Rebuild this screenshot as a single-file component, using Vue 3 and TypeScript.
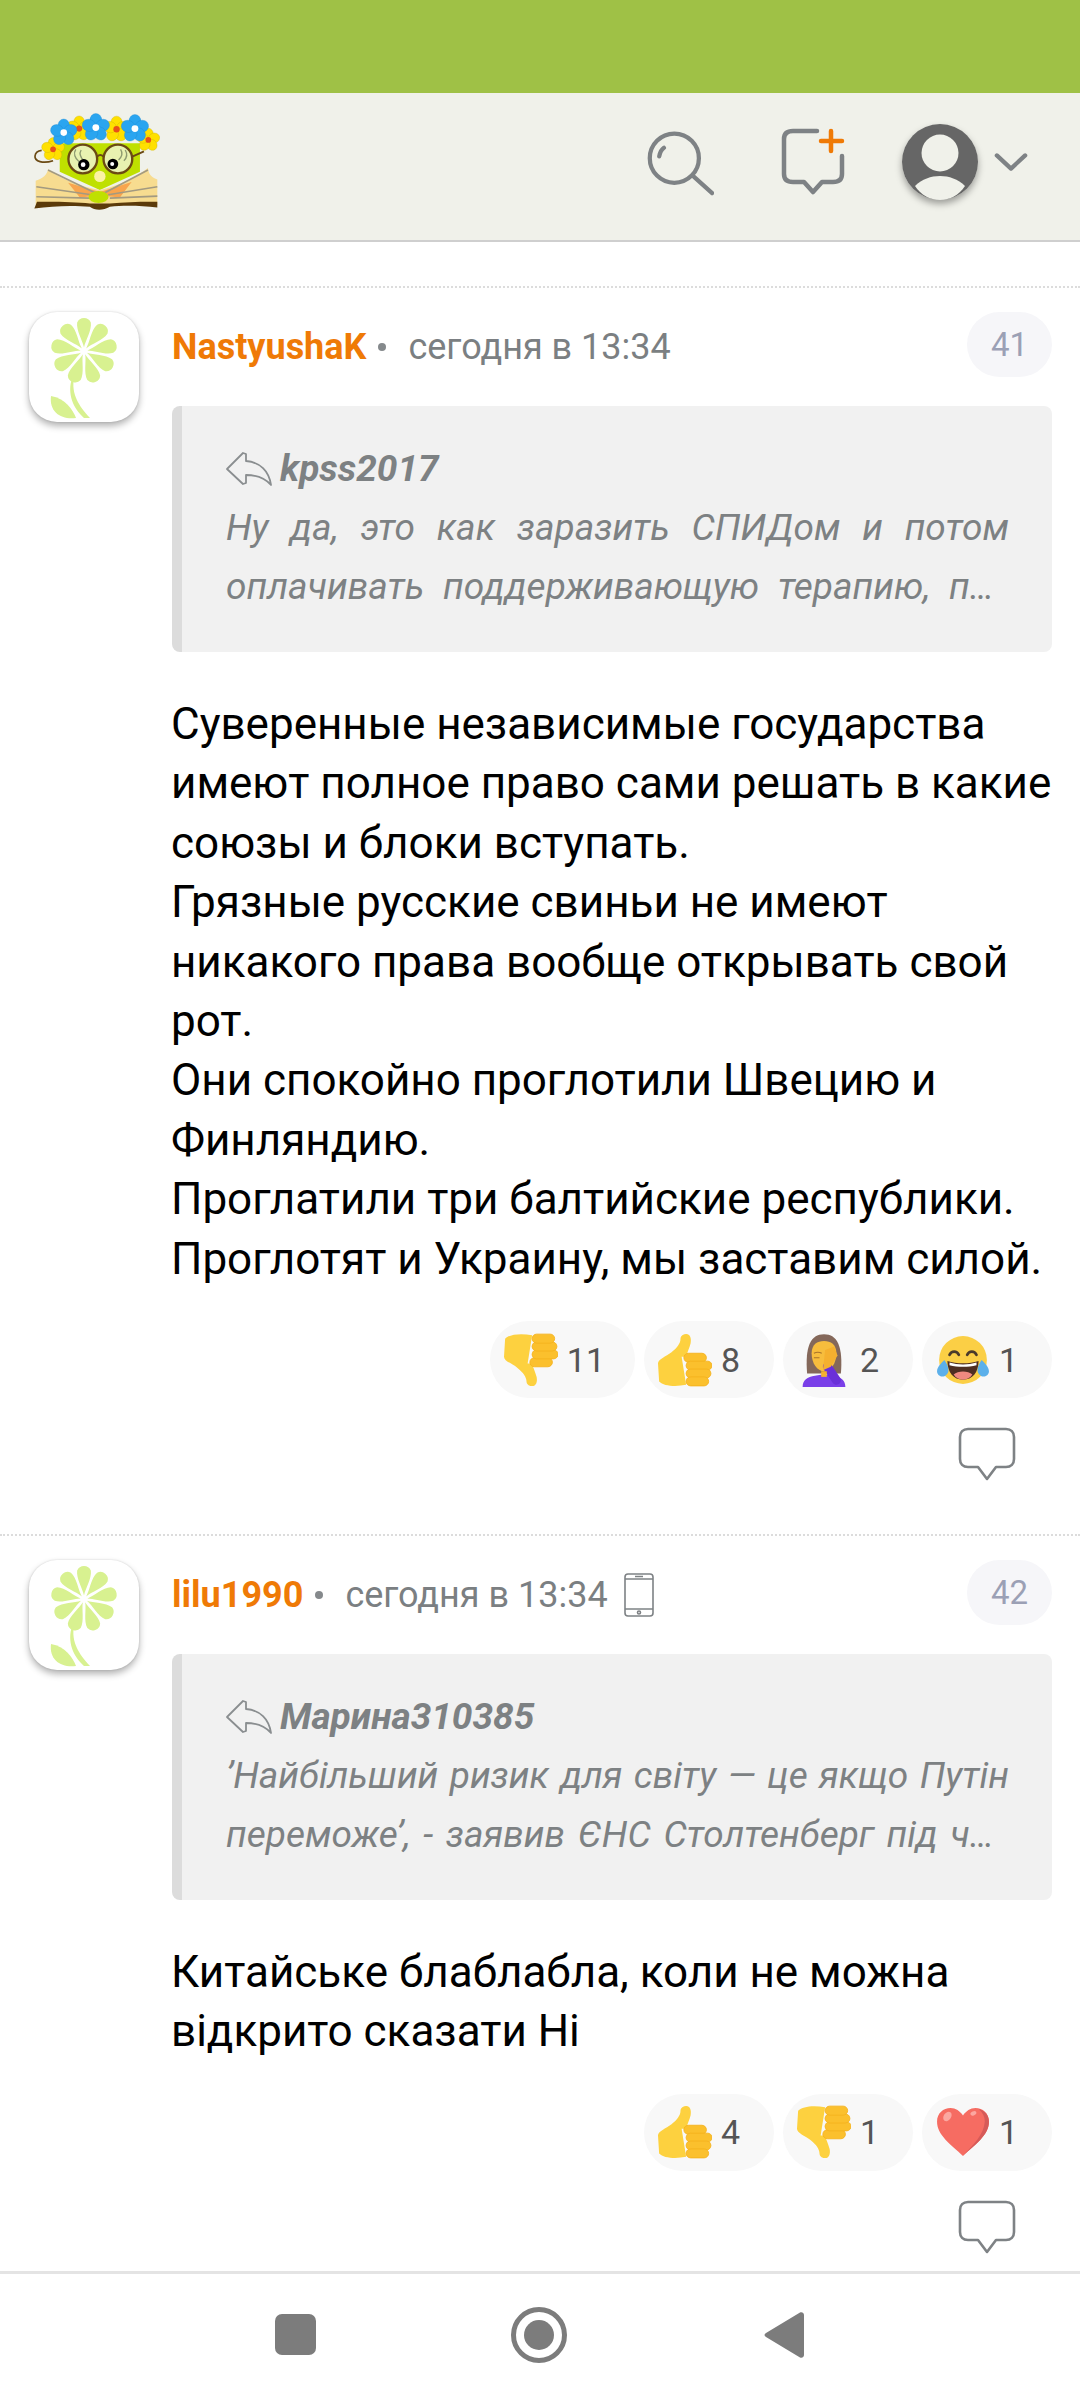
<script setup lang="ts">
interface Reaction { icon: string; count: number }
interface Comment {
  name: string; num: number; mobile: boolean; quoteAuthor: string; quote: string[];
  lines: string[]; reactions: Reaction[];
}
const comments: Comment[] = [
  {
    name: 'NastyushaK', num: 41, mobile: false, quoteAuthor: 'kpss2017',
    quote: ['Ну да, это как заразить СПИДом и потом', 'оплачивать поддерживающую терапию, п…'],
    lines: [
      'Суверенные независимые государства', 'имеют полное право сами решать в какие', 'союзы и блоки вступать.',
      'Грязные русские свиньи не имеют', 'никакого права вообще открывать свой', 'рот.',
      'Они спокойно проглотили Швецию и', 'Финляндию.', 'Проглатили три балтийские республики.',
      'Проглотят и Украину, мы заставим силой.',
    ],
    reactions: [
      { icon: 'down', count: 11 }, { icon: 'up', count: 8 }, { icon: 'palm', count: 2 }, { icon: 'laugh', count: 1 },
    ],
  },
  {
    name: 'lilu1990', num: 42, mobile: true, quoteAuthor: 'Марина310385',
    quote: ['’Найбільший ризик для світу — це якщо Путін', 'переможе’, - заявив ЄНС Столтенберг під ч…'],
    lines: ['Китайське блаблабла, коли не можна', 'відкрито сказати Ні'],
    reactions: [{ icon: 'up', count: 4 }, { icon: 'down', count: 1 }, { icon: 'heart', count: 1 }],
  },
];
const petals: number[] = [0, 40, 80, 120, 160, 200, 240, 280, 320];
const fivePetals: number[] = [0, 72, 144, 216, 288];
const flowers = [
  { x: 100, y: 178, r: 25, c: '#ffe000', m: '#e8501a' },
  { x: 385, y: 150, r: 25, c: '#ffe000', m: '#e8501a' },
  { x: 178, y: 116, r: 27, c: '#ffe000', m: '#e8501a' },
  { x: 290, y: 118, r: 28, c: '#ffe000', m: '#e8501a' },
  { x: 132, y: 128, r: 29, c: '#2aa5f0', m: '#ffffff' },
  { x: 228, y: 113, r: 30, c: '#2aa5f0', m: '#ffffff' },
  { x: 345, y: 116, r: 30, c: '#2aa5f0', m: '#ffffff' },
];
</script>

<template>
  <div class="page">
    <svg class="defs" width="0" height="0" aria-hidden="true">
      <defs>
        <symbol id="flower" viewBox="0 0 110 110">
          <g transform="translate(55 39) scale(1.14)" fill="#d8f190">
            <path v-for="a in petals" :key="a" :transform="`rotate(${a})`"
              d="M0 -3 C-1 -9 -7 -18 -6 -25 A6.500 6.500 0 0 1 6 -25 C7 -18 1 -9 0 -3Z" />
          </g>
          <path d="M45 66 C42 82 50 94 61 106 L55 106 C44 96 38 82 43 66Z" fill="#d8f190" />
          <path d="M22 84 C36 86 44 98 47 106 C32 108 20 100 22 84Z" fill="#d8f190" />
        </symbol>
        <symbol id="up" viewBox="0 0 48 48">
          <path d="M24 1c4-1 6 3 5 8-1 4-3 8-4 12h-4L25 46c-10 2-20 1-24-3L0 27c0-4 7-6 12-10 5-4 8-8 8-12 0-2 2-4 4-4z" fill="#fdd13f" />
          <g fill="#fbc02d" stroke="#f5b21e" stroke-width=".8">
            <rect x="23" y="18" width="20" height="8" rx="4" />
            <rect x="25" y="25" width="23" height="8" rx="4" />
            <rect x="25" y="32" width="22" height="8" rx="4" />
            <rect x="25" y="39" width="20" height="8" rx="4" />
          </g>
        </symbol>
        <symbol id="down" viewBox="0 0 48 48">
          <g transform="matrix(1 0 0 -1 0 48)">
            <path d="M24 1c4-1 6 3 5 8-1 4-3 8-4 12h-4L25 46c-10 2-20 1-24-3L0 27c0-4 7-6 12-10 5-4 8-8 8-12 0-2 2-4 4-4z" fill="#fdd13f" />
            <g fill="#fbc02d" stroke="#f5b21e" stroke-width=".8">
              <rect x="23" y="18" width="20" height="8" rx="4" />
              <rect x="25" y="25" width="23" height="8" rx="4" />
              <rect x="25" y="32" width="22" height="8" rx="4" />
              <rect x="25" y="39" width="20" height="8" rx="4" />
            </g>
          </g>
        </symbol>
        <symbol id="palm" viewBox="0 0 48 48">
          <path d="M9 36C7 12 12 1 24 1s17 11 15 35z" fill="#84685a" />
          <path d="M13 18c0-8 5-11 11-11s11 3 11 11c0 9-5 16-11 16s-11-7-11-16z" fill="#f7bd3d" />
          <path d="M5 48c0-6 4-9 11-10l5-1h6l5 1c7 1 11 4 11 10z" fill="#7a3fe8" />
          <path d="M35 42 27 30" stroke="#6a30d8" stroke-width="8" stroke-linecap="round" />
          <path d="M23 33 25 15l8-3 3 8-6 10z" fill="#f5b02f" />
          <path d="M24 34v5" stroke="#f5b02f" stroke-width="5" />
          <path d="M15 18c2-1 5-1 7 0M15 22h5" stroke="#a8742a" stroke-width="1" fill="none" />
        </symbol>
        <symbol id="laugh" viewBox="0 0 52 48">
          <circle cx="26" cy="24" r="23" fill="#fbcf45" />
          <path d="M13 19c2-4 7-4 9 0M30 19c2-4 7-4 9 0" stroke="#4a3a2a" stroke-width="2.600" fill="none" stroke-linecap="round" />
          <path d="M11 25c9 3 21 3 30 0 0 11-6 18-15 18s-15-7-15-18z" fill="#4f2f22" />
          <path d="M17 38c4-4 14-4 18 0-2 3-5 5-9 5s-7-2-9-5z" fill="#f08a80" />
          <path d="M13 26.500c8 2.500 18 2.500 26 0v2.500c-8 2-18 2-26 0z" fill="#fff" />
          <path d="M8 24c-3 3-7 7-7 11 0 3 3 5 5 5 3 0 6-3 6-6 0-4-2-7-4-10zM44 24c3 3 7 7 7 11 0 3-3 5-5 5-3 0-6-3-6-6 0-4 2-7 4-10z" fill="#5cb0ea" />
        </symbol>
        <symbol id="heart" viewBox="0 0 52 48">
          <path d="M26 47C14 36 1 27 1 14 1 6 7 1 14 1c5 0 9 3 12 7 3-4 7-7 12-7 7 0 13 5 13 13 0 13-13 22-25 33z" fill="#f66c62" />
          <path d="M51 14c0 13-13 22-25 33 10-11 20-20 21-33 0-5-2-9-6-12 6 1 10 6 10 12z" fill="#d65a58" />
          <ellipse cx="11" cy="9" rx="3.500" ry="5" transform="rotate(35 11 9)" fill="#fba7a0" />
          <ellipse cx="36" cy="6" rx="3" ry="2" transform="rotate(-25 36 6)" fill="#fba7a0" />
        </symbol>
      </defs>
    </svg>

    <div class="statusbar"></div>

    <header class="topbar">
      <svg class="logo" viewBox="40 60 380 300">
        <path d="M100 212C70 222 44 214 46 198c1-10 10-16 20-17" stroke="#6b4a14" stroke-width="5" fill="none" />
        <path d="M120 160H360V245L240 300 120 245Z" fill="#bfe000" />
        <path d="M48 345V272C70 265 82 255 85 238c40 30 95 52 155 62v45Z" fill="#f7dc90" />
        <path d="M412 345V268C392 262 386 250 384 234c-40 30-85 52-144 66v45Z" fill="#f7dc90" />
        <path d="M145 278 240 306 335 276 300 322 240 316 180 322Z" fill="#f8a54e" />
        <g stroke="#a39a80" stroke-width="5" fill="none">
          <path d="M225 308 85 240M215 314 50 290M210 324 50 320M255 308 384 240M265 314 412 290M270 324 412 318" />
        </g>
        <path d="M44 355 52 335C110 334 170 336 210 340H270C320 336 370 334 412 335V352C360 346 310 345 270 350 250 362 225 362 210 350 160 345 100 347 44 355Z" fill="#5b3a0a" />
        <ellipse cx="236" cy="321" rx="30" ry="18" fill="#bfe000" />
        <ellipse cx="240" cy="259" rx="17" ry="17" fill="#fcf2a5" />
        <circle cx="189" cy="207" r="43" fill="#e8f2b0" stroke="#6b4a14" stroke-width="7" />
        <circle cx="294" cy="207" r="43" fill="#e8f2b0" stroke="#6b4a14" stroke-width="7" />
        <path d="M232 200Q241 190 251 200M337 200 372 184" stroke="#6b4a14" stroke-width="6" fill="none" />
        <path d="M178 215C165 205 160 190 168 178M192 212C180 200 178 190 184 180M296 210C306 200 310 190 302 178M312 212C322 202 322 190 316 180" stroke="#8d9a70" stroke-width="4" fill="none" />
        <circle cx="192" cy="224" r="17" fill="#000" /><circle cx="190" cy="224" r="7" fill="#fff" />
        <circle cx="279" cy="222" r="16" fill="#000" /><circle cx="277" cy="222" r="6" fill="#fff" />
        <g v-for="f in flowers" :key="f.x">
          <ellipse v-for="a in fivePetals" :key="a" :cx="f.x" :cy="f.y - f.r * 0.72" :rx="f.r * 0.6" :ry="f.r * 0.68"
            :fill="f.c" :stroke="f.c === '#ffe000' ? '#c9b000' : '#1d8ad0'" stroke-width="1"
            :transform="`rotate(${a} ${f.x} ${f.y})`" />
          <circle :cx="f.x" :cy="f.y" :r="f.r * 0.34" :fill="f.m" />
        </g>
      </svg>
      <div class="actions">
        <svg class="ic-search" viewBox="0 0 72 72" fill="none" stroke="#7e8285" stroke-width="4.500" stroke-linecap="round">
          <circle cx="30" cy="32" r="26" />
          <path d="M50 51 70 69M14 30c1-5 2-7 5-9" />
        </svg>
        <svg class="ic-chat" viewBox="0 0 66 72" fill="none" stroke-width="4.500" stroke-linecap="round" stroke-linejoin="round">
          <path d="M37 5H13C7 5 4 8 4 13V48C4 53 7 56 13 56H24L33 66 42 56H53C59 56 62 53 62 48V30" stroke="#7e8285" />
          <path d="M51 5V25M41 15H62" stroke="#ef7a06" />
        </svg>
        <div class="me">
          <svg viewBox="0 0 76 76">
            <circle cx="38" cy="38" r="38" fill="#666" />
            <circle cx="38" cy="29" r="18.500" fill="#f0f1ea" />
            <path d="M13 62C20 55 29 52 38 52S56 55 63 62C57 71 48 76 38 76S19 71 13 62Z" fill="#f0f1ea" />
          </svg>
        </div>
        <svg class="ic-chev" viewBox="0 0 36 22" fill="none" stroke="#7e8285" stroke-width="4.500" stroke-linecap="round" stroke-linejoin="round">
          <path d="M3 4 18 18 33 4" />
        </svg>
      </div>
    </header>

    <main class="feed">
      <article v-for="c in comments" :key="c.num" class="comment">
        <div class="avatar">
          <svg viewBox="0 0 110 110"><use href="#flower" /></svg>
        </div>
        <div class="body">
          <div class="meta">
            <span class="name">{{ c.name }}</span>
            <span class="dot"></span>
            <span class="time">сегодня в 13:34</span>
            <svg v-if="c.mobile" class="phone" viewBox="0 0 30 44" fill="none" stroke="#7e8285" stroke-width="1.600">
              <rect x="1" y="1" width="28" height="42" rx="3" />
              <path d="M1 6H29M1 36H29M11 3.500H19" />
              <circle cx="15" cy="39.500" r="1.500" />
            </svg>
            <span class="num">{{ c.num }}</span>
          </div>

          <blockquote class="quote">
            <div class="q-author">
              <svg class="q-arrow" viewBox="0 0 46 36" fill="none" stroke="#8a8e90" stroke-width="1.800" stroke-linejoin="round">
                <path d="M1 18 17 2 20 3V10C34 11 43 20 45 34 38 26 30 24 20 24V32L17 33Z" />
              </svg>
              <span>{{ c.quoteAuthor }}</span>
            </div>
            <p class="q-line">{{ c.quote[0] }}</p>
            <p class="q-line q-last">{{ c.quote[1] }}</p>
          </blockquote>

          <p class="text"><template v-for="(l, i) in c.lines" :key="i">{{ l }}<br /></template></p>

          <div class="reactions">
            <div v-for="r in c.reactions" :key="r.icon" class="pill">
              <svg class="emoji"><use :href="`#${r.icon}`" width="54" height="54" /></svg>
              <span>{{ r.count }}</span>
            </div>
          </div>

          <div class="reply">
            <svg viewBox="0 0 58 54" fill="none" stroke="#7e8285" stroke-width="2.600" stroke-linejoin="round">
              <path d="M10 2H48C53 2 56 5 56 10V32C56 37 53 40 48 40H38L29 52 20 40H10C5 40 2 37 2 32V10C2 5 5 2 10 2Z" />
            </svg>
          </div>
        </div>
      </article>
    </main>

    <nav class="navbar">
      <span class="nav-square"></span>
      <span class="nav-circle"><span></span></span>
      <svg class="nav-back" viewBox="0 0 42 48"><path d="M3 22 37 1.500C39 0.500 41 2 41 4V44C41 46 39 47.500 37 46.500L3 26C1 25 1 23 3 22Z" fill="#7c7c7c" /></svg>
    </nav>
  </div>
</template>

<style scoped>
.page {
  width: 1080px;
  height: 2400px;
  display: flex;
  flex-direction: column;
  overflow: hidden;
  background: #fff;
  font-family: Roboto, "Noto Sans", sans-serif;
  color: #000;
  position: relative;
}
.defs { position: absolute; }
.statusbar { height: 93px; background: #9fc146; flex: none; }
.topbar {
  flex: none;
  height: 149px;
  box-sizing: border-box;
  background: #f0f1ea;
  border-bottom: 2px solid #cfcfcf;
  display: flex;
  justify-content: space-between;
  padding: 16px 52px 0 33px;
}
.logo { width: 127px; height: 102px; }
.actions { display: flex; align-items: center; height: 106px; }
.ic-search { width: 68px; height: 70px; }
.ic-chat { width: 66px; height: 72px; margin-left: 66px; }
.me { width: 76px; height: 76px; margin-left: 56px; border-radius: 50%; box-shadow: 0 4px 7px rgba(0, 0, 0, .35); }
.me svg { display: block; width: 76px; height: 76px; }
.ic-chev { width: 34px; height: 22px; margin-left: 16px; }
.feed { flex: 1; min-height: 0; overflow: hidden; padding-top: 44px; }
.comment {
  display: flex;
  border-top: 2px dotted #dcdcdc;
  padding: 24px 28px 53px 29px;
}
.avatar {
  flex: none;
  width: 110px;
  height: 110px;
  border-radius: 28px;
  background: #fff;
  box-shadow: 0 4px 7px rgba(0, 0, 0, .3), 0 0 2px rgba(0, 0, 0, .15);
}
.avatar svg { display: block; width: 100%; height: 100%; }
.body { flex: 1; min-width: 0; margin-left: 33px; }
.meta { display: flex; align-items: center; height: 70px; font-size: 36px; white-space: nowrap; }
.name { color: #ef7a06; font-weight: 700; }
.dot { width: 8px; height: 8px; margin: 0 22px 0 12px; border-radius: 50%; background: #85898c; }
.time { color: #7b7f82; }
.phone { width: 30px; height: 44px; margin-left: 16px; }
.num {
  margin-left: auto;
  align-self: flex-start;
  width: 85px;
  height: 65px;
  border-radius: 33px;
  background: #f6f6f9;
  color: #9ba0b5;
  font-size: 33px;
  display: flex;
  align-items: center;
  justify-content: center;
}
.quote {
  margin: 24px 0 0;
  padding: 33px 43px 36px 44px;
  border-left: 10px solid #dcdcdc;
  border-radius: 8px;
  background: #f1f1f1;
  color: #7d8183;
  font-size: 37px;
  font-style: italic;
  line-height: 59px;
}
.q-author { display: flex; align-items: center; font-weight: 700; height: 59px; }
.q-arrow { width: 46px; height: 36px; margin-right: 8px; flex: none; }
.q-line { margin: 0; white-space: nowrap; text-align: justify; text-align-last: justify; }
.q-last { margin-right: 15px; }
.text { margin: 43px 0 0; font-size: 44px; line-height: 59.4px; white-space: nowrap; margin-left: -1px; }
.reactions { display: flex; justify-content: flex-end; gap: 9px; margin-top: 32px; }
.pill {
  box-sizing: border-box;
  min-width: 130px;
  height: 77px;
  padding: 0 30px 0 14px;
  border-radius: 39px;
  background: #f8f8f8;
  display: flex;
  align-items: center;
  gap: 9px;
  color: #555;
  font-size: 34px;
}
.emoji { width: 54px; height: 54px; flex: none; }
.reply { display: flex; justify-content: flex-end; margin-top: 29px; padding-right: 36px; }
.reply svg { width: 58px; height: 54px; display: block; }
.navbar {
  flex: none;
  height: 129px;
  box-sizing: border-box;
  border-top: 3px solid #e4e4e4;
  background: #fff;
  display: flex;
  align-items: center;
  padding: 0 0 5px 275px;
}
.nav-square { width: 41px; height: 41px; border-radius: 7px; background: #7c7c7c; }
.nav-circle {
  box-sizing: border-box;
  width: 56px;
  height: 56px;
  margin-left: 195px;
  border-radius: 50%;
  border: 5px solid #7c7c7c;
  display: flex;
  align-items: center;
  justify-content: center;
}
.nav-circle span { width: 30px; height: 30px; border-radius: 50%; background: #7c7c7c; }
.nav-back { width: 42px; height: 48px; margin-left: 196px; }
</style>
